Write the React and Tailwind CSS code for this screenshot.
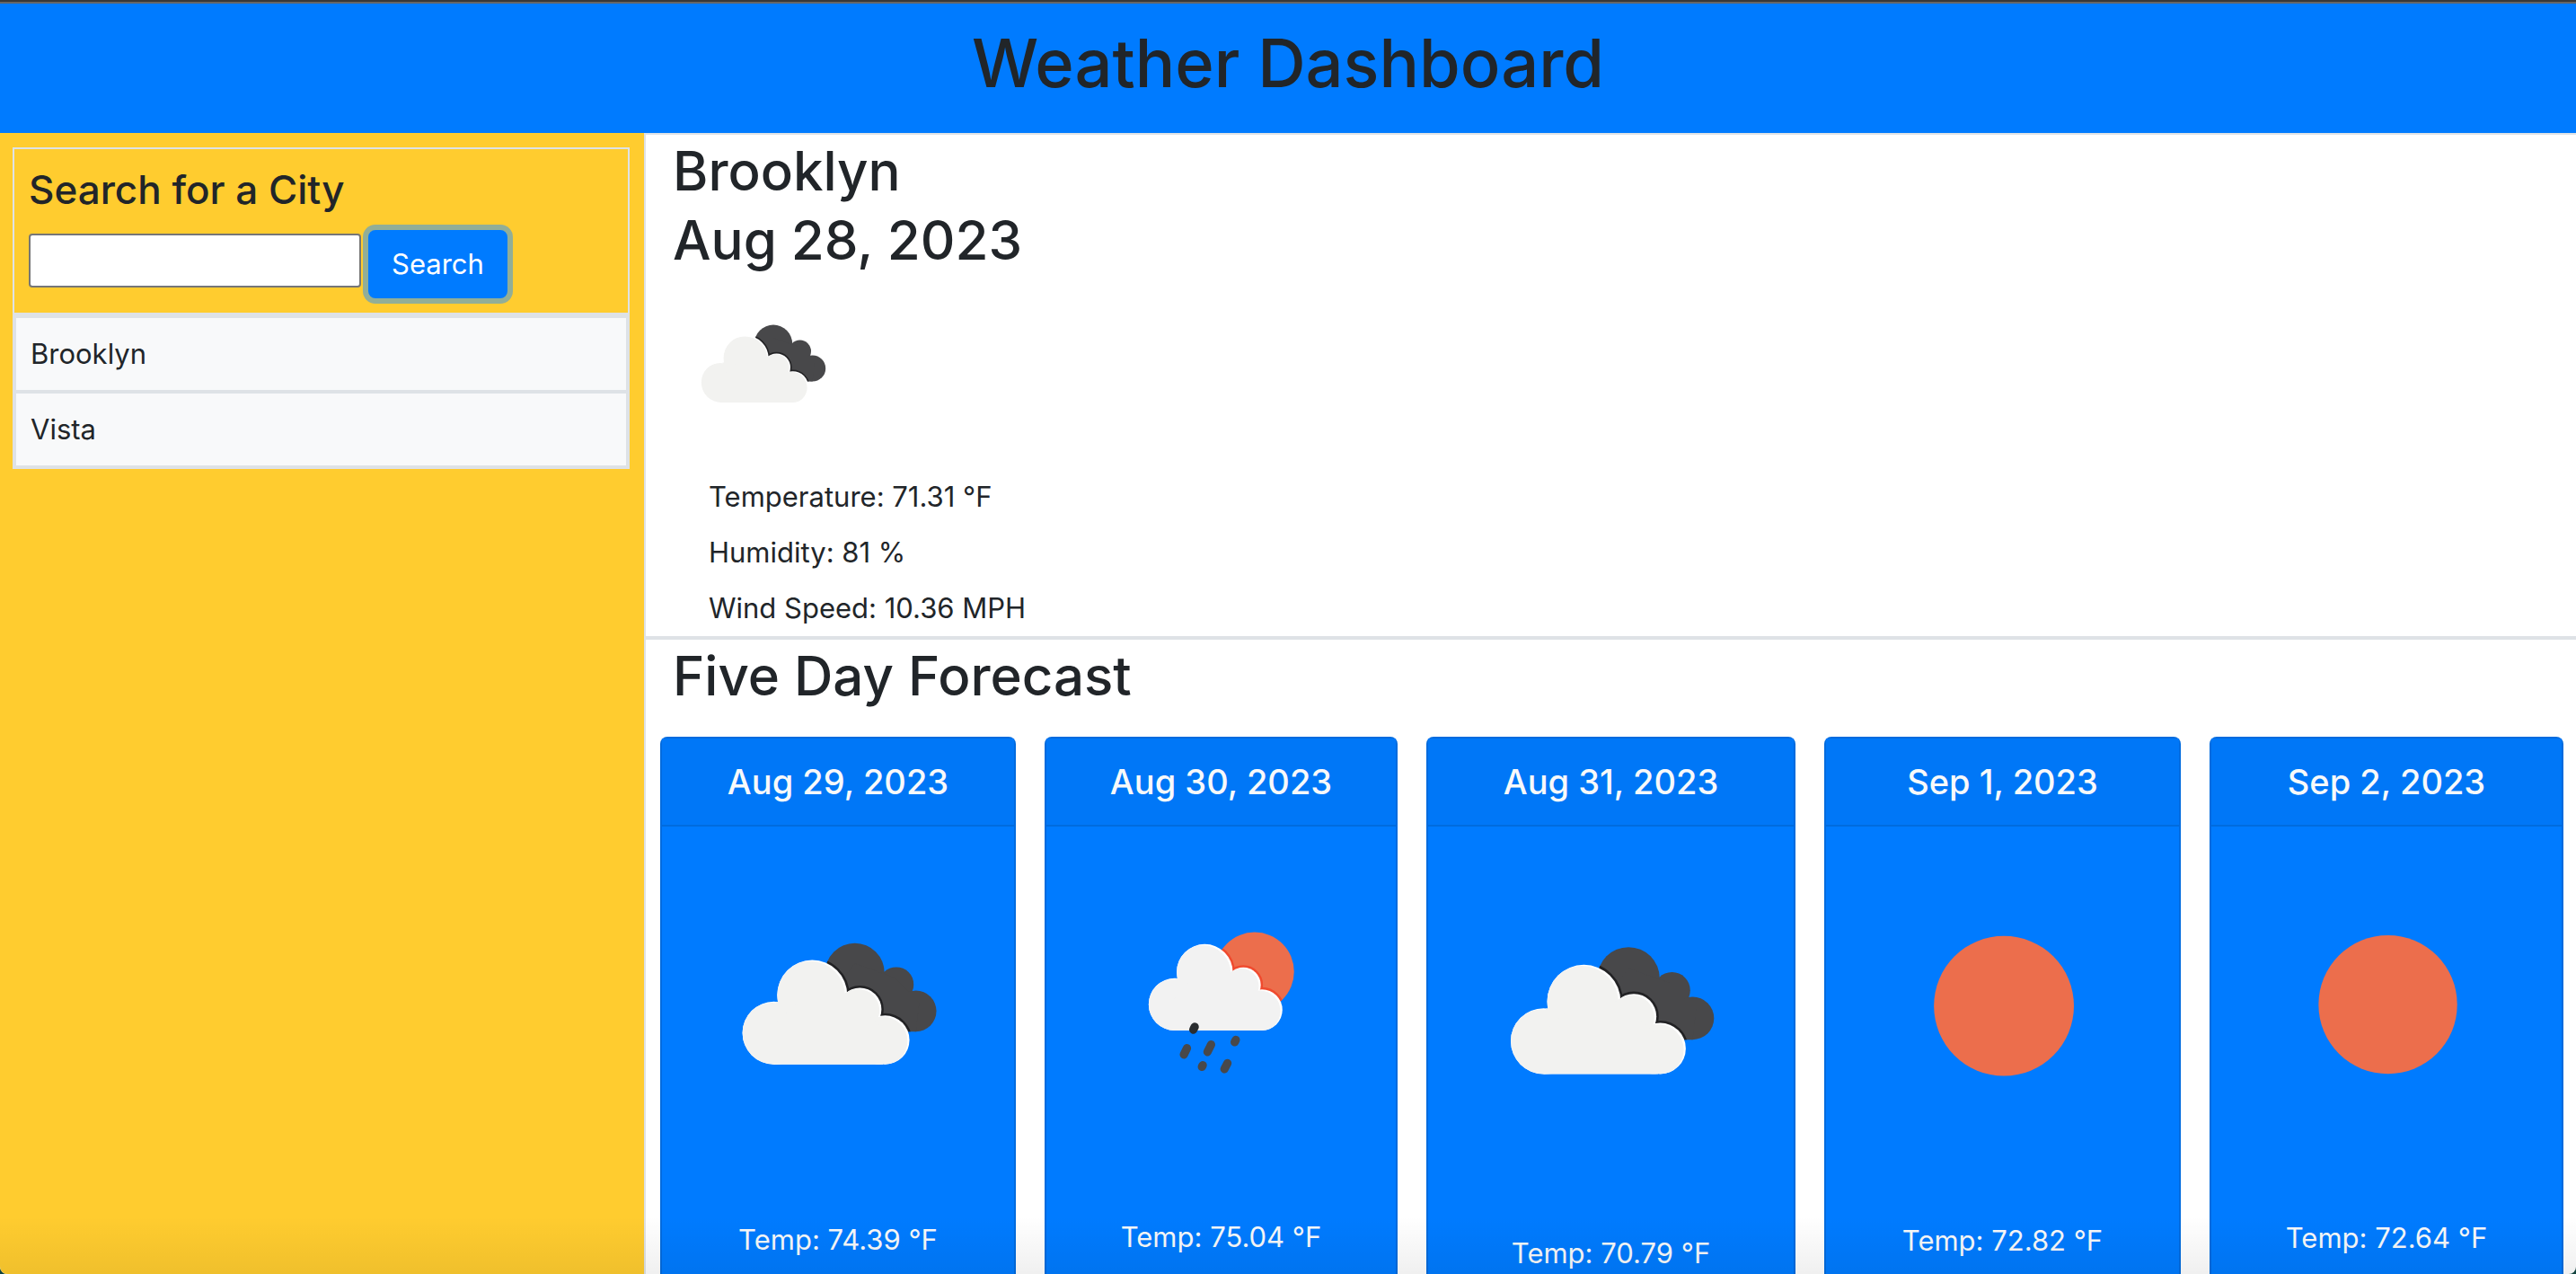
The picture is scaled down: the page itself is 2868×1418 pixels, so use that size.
import React, { useId } from "react";

const DARK_CIRCLES = [
  [56, 39.4, 10.6],
  [70.8, 43.5, 6.2],
  [77.8, 53, 7.3],
];
const CLOUDY_FRONT = {
  circles: [
    [27.1, 60.8, 11.2],
    [40.8, 47.3, 12.5],
    [57.8, 52.4, 7.7],
    [66.8, 63.3, 8.7],
  ],
  body: "M27.1 72 V58 L36 50 L57 50 L66 58 V72 Z",
};
const RAIN_FRONT = {
  circles: [
    [33.3, 51.1, 9.4],
    [44.1, 39.5, 10.1],
    [58, 44.1, 6.3],
    [64.7, 53.1, 7.4],
  ],
  body: "M33.3 60.5 V49 L40 42 L57 42 L64 49 V60.5 Z",
};

function Blob({ circles, body }) {
  return (
    <>
      {circles.map(([cx, cy, r]) => (
        <circle key={cx} cx={cx} cy={cy} r={r} />
      ))}
      <path d={body} />
    </>
  );
}

const DARK_BLOB = { circles: DARK_CIRCLES, body: "M50 44 L56 36 L70 41 L79 50 L77.8 60.3 H62 Z" };
const SUN_BLOB = { circles: [[62.1, 39.3, 14.2]], body: "M62 39 h1 v1 z" };

function LayeredIcon({ back, front, backColor, edgeColor, frontColor, label, className, children }) {
  const id = useId();
  return (
    <svg viewBox="0 0 100 100" role="img" aria-label={label} className={className}>
      <defs>
        <clipPath id={`${id}b`}>
          <Blob {...back} />
        </clipPath>
        <clipPath id={`${id}f`}>
          <Blob {...front} />
        </clipPath>
      </defs>
      <g fill={backColor}>
        <Blob {...back} />
      </g>
      <g clipPath={`url(#${id}b)`} fill={edgeColor} stroke={edgeColor} strokeWidth="1.6">
        <Blob {...front} />
      </g>
      <g fill="#ffffff">
        <Blob {...front} />
      </g>
      <g clipPath={`url(#${id}f)`}>
        <g fill={frontColor} transform="translate(-0.7 0.4)">
          <Blob {...front} />
        </g>
      </g>
      {children}
    </svg>
  );
}

function CloudyIcon({ className }) {
  return (
    <LayeredIcon
      back={DARK_BLOB}
      front={CLOUDY_FRONT}
      backColor="#48484a"
      edgeColor="#222224"
      frontColor="#f2f2f0"
      label="Broken clouds"
      className={className}
    />
  );
}

function RainIcon({ className }) {
  return (
    <LayeredIcon
      back={SUN_BLOB}
      front={RAIN_FRONT}
      backColor="#ec6e4c"
      edgeColor="#f04a2e"
      frontColor="#f2f2f2"
      label="Rain"
      className={className}
    >
      <g stroke="#48484a" strokeWidth="3" strokeLinecap="round" fill="none">
        <path d="M40.5 59.2 L40 60.2" stroke="#2a2d2f" />
        <path d="M37.7 66.9 L36.6 69.2" />
        <path d="M46.4 65.6 L45.1 68.2" />
        <path d="M43.4 73 L43.1 73.6" />
        <path d="M55.3 63.9 L54.9 64.7" />
        <path d="M52.3 72.3 L51.2 74.4" />
      </g>
    </LayeredIcon>
  );
}

function SunIcon({ className }) {
  return (
    <svg viewBox="0 0 100 100" role="img" aria-label="Clear sky" className={className}>
      <circle cx="50.5" cy="51" r="24.9" fill="#ec6e4c" />
    </svg>
  );
}

const CITIES = ["Brooklyn", "Vista"];

const FORECAST = [
  { date: "Aug 29, 2023", temp: "74.39", Icon: CloudyIcon },
  { date: "Aug 30, 2023", temp: "75.04", Icon: RainIcon },
  { date: "Aug 31, 2023", temp: "70.79", Icon: CloudyIcon },
  { date: "Sep 1, 2023", temp: "72.82", Icon: SunIcon },
  { date: "Sep 2, 2023", temp: "72.64", Icon: SunIcon },
];

function Sidebar() {
  return (
    <aside className="w-1/4 shrink-0 bg-[#ffcc2f] py-4 pr-4 pl-3.5">
      <form
        className="border-2 border-[#dee2e6] p-4"
        onSubmit={(event) => event.preventDefault()}
      >
        <h4 className="mb-4 text-[44px] leading-[58px] font-medium">
          <label htmlFor="city">Search for a City</label>
        </h4>
        <div className="flex items-start gap-2">
          <input
            id="city"
            type="text"
            className="mt-1 h-15 w-[370px] rounded-sm border-2 border-[#767676] bg-white px-1"
          />
          <button
            type="submit"
            className="rounded-lg border-2 border-[#007bff] bg-[#007bff] px-6 py-3 leading-12 text-white ring-6 ring-[rgba(38,143,255,0.5)]"
          >
            Search
          </button>
        </div>
      </form>
      <ul className="border-2 border-[#dee2e6]">
        {CITIES.map((city) => (
          <li key={city} className="border-2 border-[#dee2e6] bg-[#f8f9fa] p-4 leading-12">
            {city}
          </li>
        ))}
      </ul>
    </aside>
  );
}

function CurrentWeather() {
  return (
    <section className="border-b-4 border-[#dee2e6] pl-[30px]">
      <h2 className="-mb-0.5 pt-0.5 text-[60px] leading-[77px] font-medium">
        Brooklyn
        <br />
        Aug 28, 2023
      </h2>
      <CloudyIcon className="size-50" />
      <ul className="mt-[18px] pl-10 leading-[62px]">
        <li>Temperature: 71.31 °F</li>
        <li>Humidity: 81 %</li>
        <li>Wind Speed: 10.36 MPH</li>
      </ul>
    </section>
  );
}

function ForecastCard({ date, temp, Icon }) {
  return (
    <article className="min-w-0 rounded-t-lg border-2 border-b-0 border-[#006bde] bg-[#007bff] text-center text-[#f8f9fa]">
      <h5 className="border-b-2 border-[#006bde] bg-[#0077f7] py-6 text-[38px] leading-12 font-medium">
        {date}
      </h5>
      <div className="p-10">
        <Icon className="aspect-square w-full" />
        <p className="mt-[84px] leading-12">Temp: {temp} °F</p>
      </div>
    </article>
  );
}

export default function App() {
  return (
    <div className="h-screen bg-[#12443f]">
      <div className="relative flex h-full flex-col overflow-hidden rounded-b-lg bg-white font-['Inter','Liberation_Sans',sans-serif] text-[31px] text-[#212529]">
        <header className="border-t-2 border-[#383838] bg-[#007bff] text-center">
          <div className="border-t-2 border-[#666666] pt-[18px] pb-[30px]">
            <h1 className="text-[74px] leading-24 font-medium">Weather Dashboard</h1>
          </div>
        </header>
        <div className="flex min-h-0 flex-1">
          <Sidebar />
          <main className="flex min-w-0 flex-1 flex-col border-t-2 border-l-2 border-[#dee2e6]">
            <CurrentWeather />
            <section className="flex min-h-0 flex-1 flex-col">
              <h2 className="-mb-0.5 pt-0.5 pl-[30px] text-[60px] leading-[77px] font-medium">
                Five Day Forecast
              </h2>
              <div className="mt-[31px] grid min-h-0 flex-1 grid-cols-[396fr_393fr_411fr_397fr_394fr] gap-8 pr-3.5 pl-4">
                {FORECAST.map((day) => (
                  <ForecastCard key={day.date} {...day} />
                ))}
              </div>
            </section>
          </main>
        </div>
        <div className="pointer-events-none absolute inset-x-0 bottom-0 h-16 bg-linear-to-t from-black/6 to-transparent" />
      </div>
    </div>
  );
}
